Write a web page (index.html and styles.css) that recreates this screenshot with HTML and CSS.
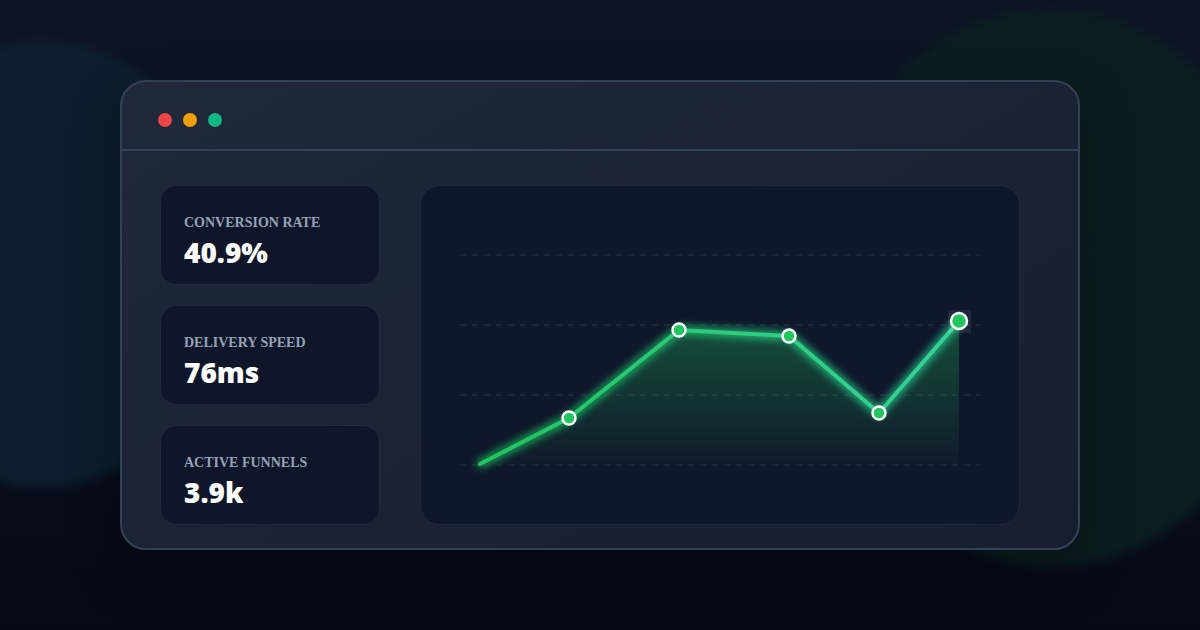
FILE: index.html
```html
<!DOCTYPE html>
<html lang="en">
<head>
    <meta charset="UTF-8">
    <meta name="viewport" content="width=device-width, initial-scale=1.0">
    <title>Funnel Dashboard</title>
    <link rel="stylesheet" href="styles.css">
</head>
<body>
    <div class="window">
        <div class="window-bar">
            <span class="dot dot-red"></span>
            <span class="dot dot-yellow"></span>
            <span class="dot dot-green"></span>
        </div>

        <div class="window-body">
            <div class="stat">
                <p class="stat-label">Conversion Rate</p>
                <p class="stat-value">40.9%</p>
            </div>
            <div class="stat">
                <p class="stat-label">Delivery Speed</p>
                <p class="stat-value">76ms</p>
            </div>
            <div class="stat">
                <p class="stat-label">Active Funnels</p>
                <p class="stat-value">3.9k</p>
            </div>

            <div class="chart">
                <svg width="598" height="338" viewBox="1 1 598 338">
                    <defs>
                        <linearGradient id="lineGrad" x1="60" y1="0" x2="539" y2="0" gradientUnits="userSpaceOnUse">
                            <stop offset="0" stop-color="#22c55e"/>
                            <stop offset="1" stop-color="#34d399"/>
                        </linearGradient>
                        <linearGradient id="areaGrad" x1="0" y1="136" x2="0" y2="280" gradientUnits="userSpaceOnUse">
                            <stop offset="0" stop-color="#22c55e" stop-opacity="0.32"/>
                            <stop offset="1" stop-color="#22c55e" stop-opacity="0.02"/>
                        </linearGradient>
                        <filter id="glow" x="-20%" y="-40%" width="140%" height="180%">
                            <feGaussianBlur stdDeviation="5" result="blur"/>
                            <feMerge>
                                <feMergeNode in="blur"/>
                                <feMergeNode in="blur"/>
                                <feMergeNode in="SourceGraphic"/>
                            </feMerge>
                        </filter>
                    </defs>

                    <g class="grid-lines">
                        <line x1="40" y1="70" x2="560" y2="70"/>
                        <line x1="40" y1="140" x2="560" y2="140"/>
                        <line x1="40" y1="210" x2="560" y2="210"/>
                        <line x1="40" y1="280" x2="560" y2="280"/>
                    </g>

                    <polygon points="60,279 149,233 259,145 369,151 459,228 539,136 539,280 60,280" fill="url(#areaGrad)"/>
                    <polyline points="60,279 149,233 259,145 369,151 459,228 539,136" fill="none" stroke="url(#lineGrad)" stroke-width="4" stroke-linecap="round" stroke-linejoin="round" filter="url(#glow)"/>

                    <rect x="528" y="125" width="23" height="23" fill="#ffffff" fill-opacity="0.07"/>

                    <g class="points">
                        <circle cx="149" cy="233" r="6.5"/>
                        <circle cx="259" cy="145" r="6.5"/>
                        <circle cx="369" cy="151" r="6.5"/>
                        <circle cx="459" cy="228" r="6.5"/>
                        <circle cx="539" cy="136" r="8"/>
                    </g>
                </svg>
            </div>
        </div>
    </div>
</body>
</html>
```

FILE: styles.css
```css
html, body {
    margin: 0;
    padding: 0;
}

body {
    width: 1200px;
    height: 630px;
    overflow: hidden;
    box-sizing: border-box;
    padding-top: 80px;
    font-family: "Lato", "Liberation Sans", sans-serif;
    /* two soft blobs behind the window */
    background:
        radial-gradient(ellipse 194px 230px at 42px 264px, rgba(12, 31, 46, 0.9) 94%, rgba(12, 31, 46, 0) 100%),
        radial-gradient(ellipse 242px 286px at 1050px 288px, rgba(10, 30, 32, 0.95) 95%, rgba(10, 30, 32, 0) 100%),
        linear-gradient(180deg, #0d1425 0%, #0a1020 55%, #050918 100%);
}

.window {
    margin-left: 120px;
    width: 960px;
    height: 470px;
    box-sizing: border-box;
    border: 2px solid #334155;
    border-radius: 26px;
    background: linear-gradient(150deg, #1f293a 0%, #1a2234 55%, #171e2f 100%);
    box-shadow: 0 20px 50px rgba(0, 0, 0, 0.35);
    overflow: hidden;
}

.window-bar {
    height: 69px;
    box-sizing: border-box;
    padding: 31px 0 0 36px;
    display: flex;
    gap: 11px;
    border-bottom: 2px solid #334155;
}

.dot {
    width: 14px;
    height: 14px;
    border-radius: 50%;
}
.dot-red { background: #ef4444; }
.dot-yellow { background: #f59e0b; }
.dot-green { background: #10b981; }

.window-body {
    display: grid;
    grid-template-columns: 220px 600px;
    grid-template-rows: repeat(3, 100px);
    column-gap: 40px;
    row-gap: 20px;
    padding: 34px 0 0 38px;
}

.stat {
    box-sizing: border-box;
    background: #0f1629;
    border: 1px solid #1f2a3c;
    border-radius: 16px;
    padding: 28px 23px 0;
}

.stat-label {
    margin: 0;
    font-family: "Liberation Serif", serif;
    font-weight: 700;
    font-size: 14px;
    line-height: 17px;
    text-transform: uppercase;
    color: #94a3b8;
}

.stat-value {
    margin: 3px 0 0;
    font-family: "Open Sans", "Liberation Sans", sans-serif;
    font-weight: 800;
    font-size: 28px;
    line-height: 36px;
    color: #ffffff;
}

.chart {
    grid-column: 2;
    grid-row: 1 / span 3;
    box-sizing: border-box;
    background: #0f172a;
    border: 1px solid #1f2a3c;
    border-radius: 20px;
    overflow: hidden;
}

.chart svg {
    display: block;
}

.grid-lines line {
    stroke: #334155;
    stroke-opacity: 0.7;
    stroke-width: 1;
    stroke-dasharray: 6 6;
}

.points circle {
    fill: #22c55e;
    stroke: #ffffff;
    stroke-width: 2.5;
}
```
